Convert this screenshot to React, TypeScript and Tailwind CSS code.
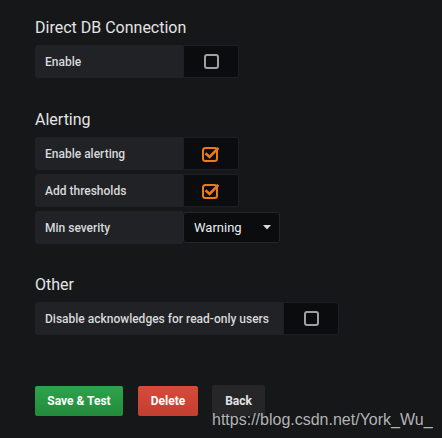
import React from "react";

function Checkbox({ checked }: { checked?: boolean }) {
  if (checked) {
    return (
      <svg width="18" height="16" viewBox="0 0 18 16" className="block">
        <rect x="1" y="2" width="14" height="13" rx="2.5" fill="none" stroke="#eb7b18" strokeWidth="2" />
        <path d="M4.5 8.2 L7.6 11 L15.5 2.8" fill="none" stroke="#eb7b18" strokeWidth="2.6" strokeLinecap="square" />
      </svg>
    );
  }
  return <div className="w-[15px] h-[15px] rounded-[3px] border-2 border-[#a0a0a3]" />;
}

function Row({
  label,
  labelWidth,
  children,
}: {
  label: string;
  labelWidth: string;
  children: React.ReactNode;
}) {
  return (
    <div className="flex h-[33px]">
      <div
        className={`${labelWidth} flex items-center pl-[9px] pr-[10px] whitespace-nowrap bg-[#202226] border border-[#202226] rounded-l-[3px] text-[12px] font-medium text-[#d8d9da]`}
      >
        {label}
      </div>
      {children}
    </div>
  );
}

function CheckCell({ checked }: { checked?: boolean }) {
  return (
    <div className="w-[56px] flex items-center justify-center bg-[#0b0c0e] border border-[#1e1f22] rounded-r-[3px]">
      <Checkbox checked={checked} />
    </div>
  );
}

function Heading({ children }: { children: React.ReactNode }) {
  return <h3 className="text-[16px] leading-[20px] text-[#e3e4e5] mb-[7px]">{children}</h3>;
}

export default function App() {
  return (
    <div
      className="relative w-[442px] h-[438px] bg-[#161719] pl-[35px] pt-[18px] overflow-hidden"
      style={{ fontFamily: "Roboto, 'Liberation Sans', sans-serif" }}
    >
      {/* Direct DB Connection */}
      <Heading>Direct DB Connection</Heading>
      <Row label="Enable" labelWidth="w-[148px]">
        <CheckCell />
      </Row>

      {/* Alerting */}
      <div className="mt-[32px]">
        <Heading>Alerting</Heading>
        <div className="flex flex-col gap-[4px]">
          <Row label="Enable alerting" labelWidth="w-[148px]">
            <CheckCell checked />
          </Row>
          <Row label="Add thresholds" labelWidth="w-[148px]">
            <CheckCell checked />
          </Row>
          <Row label="Min severity" labelWidth="w-[148px]">
            <div className="w-[97px] my-[1px] flex items-center justify-between pl-[10px] pr-[8px] bg-[#0b0c0e] border border-[#262628] rounded-[3px] text-[13px] text-[#e9edf2]">
              <span>Warning</span>
              <svg width="8" height="5" viewBox="0 0 8 5">
                <path d="M0 0 L8 0 L4 4.5 Z" fill="#d8d9da" />
              </svg>
            </div>
          </Row>
        </div>
      </div>

      {/* Other */}
      <div className="mt-[31px]">
        <Heading>Other</Heading>
        <Row label="Disable acknowledges for read-only users" labelWidth="w-[248px]">
          <CheckCell />
        </Row>
      </div>

      {/* Buttons */}
      <div className="mt-[51px] flex items-start">
        <button className="w-[88px] h-[30px] rounded-[2px] bg-gradient-to-b from-[#2ea34b] to-[#238b3c] text-white text-[12px] font-bold">
          Save &amp; Test
        </button>
        <button className="ml-[15px] w-[60px] h-[30px] rounded-[2px] bg-gradient-to-b from-[#d84a3a] to-[#c23e2f] text-white text-[12px] font-bold">
          Delete
        </button>
        <button className="ml-[14px] -mt-[1px] w-[53px] h-[31px] rounded-[2px] bg-[#262628] text-[#e3e4e5] text-[12px] font-bold">
          Back
        </button>
      </div>

      {/* watermark */}
      <div
        className="absolute left-[212px] top-[412px] text-[16px] leading-[16px] text-[#d2d2d2]/85 whitespace-nowrap"
        style={{ fontFamily: "'Liberation Sans', Arial, sans-serif" }}
      >
        https://blog.csdn.net/York_Wu_
      </div>
    </div>
  );
}
